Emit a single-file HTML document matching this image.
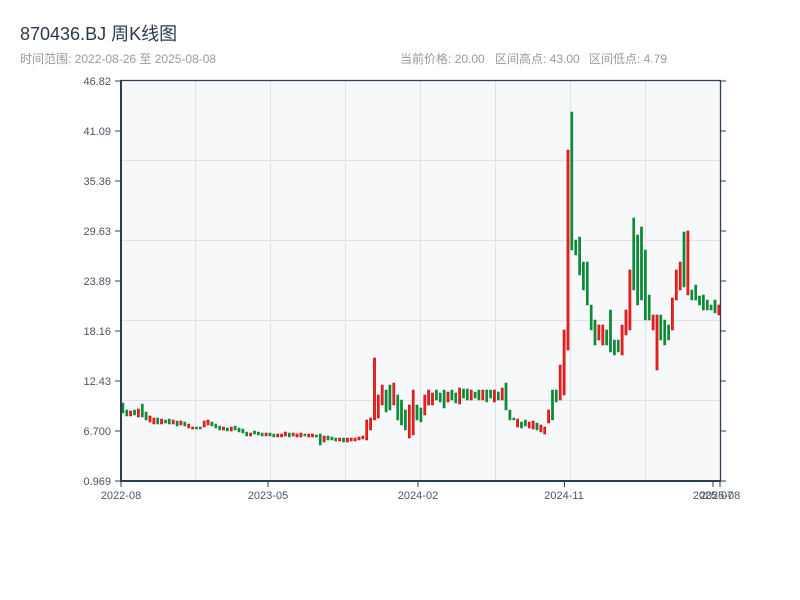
<!DOCTYPE html>
<html><head><meta charset="utf-8"><style>
html,body{margin:0;padding:0;background:#fff;width:800px;height:600px;overflow:hidden}
svg{position:absolute;left:0;top:0}
text{font-family:"Liberation Sans","Noto Sans CJK SC",sans-serif}
</style></head><body>
<svg width="800" height="600" viewBox="0 0 800 600" xmlns="http://www.w3.org/2000/svg">
<text x="20" y="40" font-size="18" fill="#2d3a4b">870436.BJ 周K线图</text>
<text x="20" y="63" font-size="12" fill="#9a9a9a">时间范围: 2022-08-26 至 2025-08-08</text>
<text x="400" y="63" font-size="12" fill="#9a9a9a">当前价格: 20.00</text>
<text x="495" y="63" font-size="12" fill="#9a9a9a">区间高点: 43.00</text>
<text x="589" y="63" font-size="12" fill="#9a9a9a">区间低点: 4.79</text>
<rect x="121" y="81" width="599" height="400" fill="#f7f8fa"/>
<g stroke="#e1e3e8" stroke-width="1">
<line x1="195.5" y1="81" x2="195.5" y2="481"/><line x1="270.5" y1="81" x2="270.5" y2="481"/>
<line x1="345.5" y1="81" x2="345.5" y2="481"/><line x1="420.5" y1="81" x2="420.5" y2="481"/>
<line x1="495.5" y1="81" x2="495.5" y2="481"/><line x1="570.5" y1="81" x2="570.5" y2="481"/>
<line x1="645.5" y1="81" x2="645.5" y2="481"/>
<line x1="121" y1="160.5" x2="720" y2="160.5"/><line x1="121" y1="240.5" x2="720" y2="240.5"/>
<line x1="121" y1="320.5" x2="720" y2="320.5"/><line x1="121" y1="400.5" x2="720" y2="400.5"/>
</g>
<g id="c"></g>
<g stroke="#2d3e50" fill="none">
<line x1="121" y1="80.5" x2="721" y2="80.5" stroke-width="1.2"/>
<line x1="121" y1="80" x2="121" y2="482" stroke-width="2"/>
<line x1="120" y1="481" x2="721" y2="481" stroke-width="2"/>
<line x1="720.5" y1="80" x2="720.5" y2="482" stroke-width="1.3"/>
</g>
<g stroke="#2d3e50" stroke-width="1">
<line x1="115" y1="81" x2="120" y2="81"/><line x1="115" y1="131" x2="120" y2="131"/>
<line x1="115" y1="181" x2="120" y2="181"/><line x1="115" y1="231" x2="120" y2="231"/>
<line x1="115" y1="281" x2="120" y2="281"/><line x1="115" y1="331" x2="120" y2="331"/>
<line x1="115" y1="381" x2="120" y2="381"/><line x1="115" y1="431" x2="120" y2="431"/>
<line x1="115" y1="481" x2="120" y2="481"/>
<line x1="721" y1="81" x2="726" y2="81"/><line x1="721" y1="131" x2="726" y2="131"/>
<line x1="721" y1="181" x2="726" y2="181"/><line x1="721" y1="231" x2="726" y2="231"/>
<line x1="721" y1="281" x2="726" y2="281"/><line x1="721" y1="331" x2="726" y2="331"/>
<line x1="721" y1="381" x2="726" y2="381"/><line x1="721" y1="431" x2="726" y2="431"/>
<line x1="721" y1="481" x2="726" y2="481"/>
<line x1="121" y1="482" x2="121" y2="487"/><line x1="268" y1="482" x2="268" y2="487"/>
<line x1="418" y1="482" x2="418" y2="487"/><line x1="564.5" y1="482" x2="564.5" y2="487"/>
<line x1="713" y1="482" x2="713" y2="487"/><line x1="720" y1="482" x2="720" y2="487"/>
</g>
<g font-size="11" fill="#4a5568" text-anchor="end">
<text x="111" y="85">46.82</text><text x="111" y="135">41.09</text>
<text x="111" y="185">35.36</text><text x="111" y="235">29.63</text>
<text x="111" y="285">23.89</text><text x="111" y="335">18.16</text>
<text x="111" y="385">12.43</text><text x="111" y="435">6.700</text>
<text x="111" y="485">0.969</text>
</g>
<g font-size="11" fill="#4a5568" text-anchor="middle">
<text x="121" y="499">2022-08</text><text x="268" y="499">2023-05</text>
<text x="418" y="499">2024-02</text><text x="564" y="499">2024-11</text>
<text x="713" y="499">2025-07</text><text x="720" y="499">2025-08</text>
</g>
</svg>
<script>
var d=[[403,413,'g'],[410,416,'g'],[411,416,'r'],[410,415,'g'],[409,417,'r'],[404,417,'g'],[412,420,'g'],[416,422,'r'],[418,424,'r'],[418,424,'g'],
[419,424,'r'],[420,423,'g'],[419,424,'g'],[420,424,'r'],[421,426,'g'],[421,425,'r'],[422,426,'g'],[424,428,'r'],[427,429,'r'],[427,429,'g'],
[427,429,'g'],[421,427,'r'],[420,425,'r'],[422,426,'g'],[424,428,'g'],[426,430,'g'],[427,430,'r'],[428,431,'g'],[427,431,'r'],[426,430,'g'],
[428,432,'g'],[429,433,'g'],[432,436,'g'],[433,436,'r'],[431,434,'g'],[432,435,'g'],[433,436,'g'],[433,436,'r'],[433,436,'g'],[434,437,'g'],
[434,437,'r'],[434,437,'r'],[432,436,'r'],[433,437,'g'],[433,436,'r'],[434,437,'r'],[433,437,'r'],[434,436,'g'],[434,437,'r'],[434,437,'r'],
[435,437,'g'],[434,445,'g'],[436,442,'r'],[436,440,'g'],[437,440,'g'],[438,441,'g'],[438,441,'r'],[438,442,'g'],[438,442,'r'],[438,441,'r'],
[438,441,'r'],[437,440,'r'],[436,439,'r'],[420,440,'r'],[418,430,'r'],[358,420,'r'],[395,418,'r'],[385,405,'r'],[390,412,'g'],[385,410,'g'],
[383,405,'r'],[395,420,'g'],[400,425,'g'],[410,430,'g'],[405,438,'r'],[390,435,'r'],[405,420,'g'],[408,422,'g'],[395,415,'r'],[390,405,'r'],
[393,405,'r'],[390,400,'g'],[393,402,'g'],[390,408,'g'],[392,402,'r'],[390,400,'g'],[393,403,'g'],[388,404,'r'],[389,398,'g'],[389,400,'g'],
[390,400,'r'],[392,398,'g'],[390,400,'g'],[390,400,'r'],[390,402,'g'],[390,398,'g'],[390,402,'r'],[392,400,'g'],[388,400,'r'],[383,410,'g'],
[410,420,'g'],[418,420,'g'],[419,427,'r'],[422,428,'g'],[420,426,'g'],[422,428,'r'],[421,429,'r'],[423,430,'g'],[425,432,'r'],[427,434,'r'],
[410,423,'r'],[390,420,'g'],[390,402,'g'],[365,400,'r'],[330,395,'r'],[150,350,'r'],[112,250,'g'],[240,255,'g'],[237,275,'g'],[262,290,'g'],
[262,305,'g'],[305,330,'g'],[320,345,'g'],[325,340,'r'],[325,345,'r'],[330,345,'g'],[310,352,'g'],[340,355,'g'],[340,352,'g'],[325,355,'r'],
[310,335,'r'],[270,330,'r'],[218,290,'g'],[235,305,'g'],[227,300,'g'],[250,320,'g'],[295,320,'g'],[315,330,'r'],[315,370,'r'],[315,340,'g'],
[320,345,'g'],[325,340,'g'],[298,330,'r'],[270,300,'r'],[262,290,'r'],[232,287,'g'],[231,295,'r'],[290,300,'g'],[285,300,'g'],[296,305,'g'],
[295,310,'g'],[300,310,'g'],[305,310,'g'],[300,313,'g'],[305,315,'r']];
var s='';for(var i=0;i<d.length;i++){var x=121.8+i*3.87,a=d[i];
var c=a[2]=='g'?'#0a8a35':'#c00000',f=a[2]=='g'?'#0a8a35':'#ee2020';
s+='<rect x="'+x.toFixed(1)+'" y="'+a[0]+'" width="2.2" height="'+(a[1]-a[0])+'" fill="'+f+'" stroke="'+c+'" stroke-width="0.5"/>';}
document.getElementById('c').innerHTML=s;
</script>
</body></html>
